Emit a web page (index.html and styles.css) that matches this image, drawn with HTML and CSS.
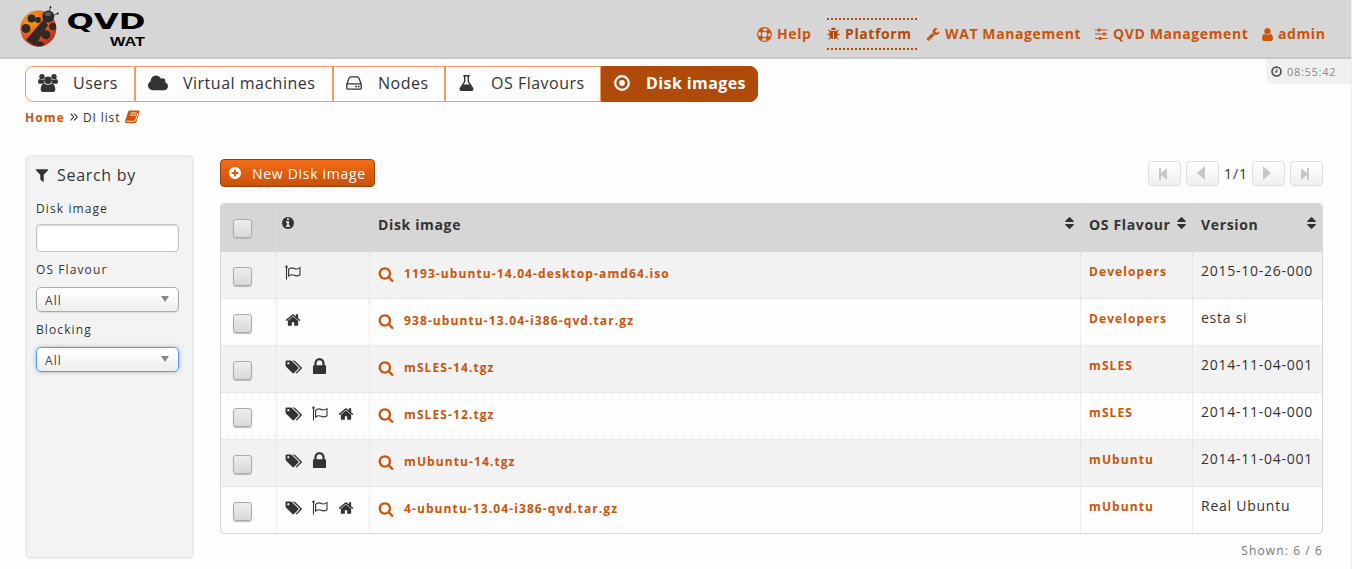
FILE: index.html
```html
<!DOCTYPE html>
<html lang="en">
<head>
<meta charset="utf-8">
<title>QVD WAT</title>
<link rel="stylesheet" href="styles.css">
</head>
<body>
<svg class="defs" width="0" height="0" aria-hidden="true">
  <symbol id="home" viewBox="0 0 1792 1792"><path d="M1472 992v480q0 26-19 45t-45 19h-384v-384h-256v384h-384q-26 0-45-19t-19-45v-480q0-1 .5-3t.5-3l575-474 575 474q1 2 1 6zm223-69l-62 74q-8 9-21 11h-3q-13 0-21-7l-692-577-692 577q-12 8-24 7-13-2-21-11l-62-74q-8-10-7-23.500t11-21.500l719-599q32-26 76-26t76 26l244 204v-195q0-14 9-23t23-9h192q14 0 23 9t9 23v408l219 182q10 8 11 21.500t-7 23.500z"/></symbol>
  <symbol id="search" viewBox="0 0 1792 1792"><path d="M1216 832q0-185-131.500-316.500t-316.500-131.500-316.500 131.500-131.500 316.500 131.500 316.500 316.500 131.500 316.500-131.500 131.500-316.500zm512 832q0 52-38 90t-90 38q-54 0-90-38l-343-342q-179 124-399 124-143 0-273.500-55.500t-225-150-150-225-55.500-273.500 55.500-273.500 150-225 225-150 273.500-55.500 273.500 55.500 225 150 150 225 55.500 273.500q0 220-124 399l343 343q37 37 37 90z"/></symbol>
  <symbol id="lock" viewBox="256 128 1280 1408"><path d="M640 768h512v-192q0-106-75-181t-181-75-181 75-75 181v192zm832 96v576q0 40-28 68t-68 28h-960q-40 0-68-28t-28-68v-576q0-40 28-68t68-28h32v-192q0-184 132-316t316-132 316 132 132 316v192h32q40 0 68 28t28 68z"/></symbol>
  <symbol id="user" viewBox="256 128 1280 1536"><path d="M1536 1399q0 109-62.500 187t-150.500 78h-854q-88 0-150.500-78t-62.500-187q0-85 8.500-160.500t31.500-152 58.500-131 94-89 134.500-34.500q131 128 313 128t313-128q76 0 134.500 34.500t94 89 58.500 131 31.500 152 8.500 160.500zm-256-887q0 159-112.500 271.500t-271.500 112.500-271.500-112.500-112.500-271.500 112.500-271.500 271.500-112.500 271.500 112.500 112.500 271.500z"/></symbol>
  <symbol id="filter" viewBox="0 0 1792 1792"><path d="M1595 295q17 41-14 70l-493 493v742q0 42-39 59-13 5-25 5-27 0-45-19l-256-256q-19-19-19-45v-486l-493-493q-31-29-14-70 17-39 59-39h1280q42 0 59 39z"/></symbol>
  <symbol id="cloud" viewBox="-64 0 1920 1792"><path d="M1856 1152q0 159-112.500 271.500t-271.500 112.500h-1088q-185 0-316.500-131.500t-131.500-316.500q0-132 71-241.500t187-163.500q-2-28-2-43 0-212 150-362t362-150q158 0 286.500 88t187.500 230q70-62 166-62 106 0 181 75t75 181q0 75-41 138 129 30 213 134.500t84 239.500z"/></symbol>
  <symbol id="plus" viewBox="0 0 1792 1792"><path d="M1344 960v-128q0-26-19-45t-45-19h-256v-256q0-26-19-45t-45-19h-128q-26 0-45 19t-19 45v256h-256q-26 0-45 19t-19 45v128q0 26 19 45t45 19h256v256q0 26 19 45t45 19h128q26 0 45-19t19-45v-256h256q26 0 45-19t19-45zm320-64q0 209-103 385.500t-279.500 279.500-385.500 103-385.500-103-279.500-279.500-103-385.500 103-385.500 279.500-279.500 385.500-103 385.500 103 279.500 279.500 103 385.500z"/></symbol>
  <symbol id="info" viewBox="128 128 1536 1536"><path d="M1152 1376v-160q0-14-9-23t-23-9h-96v-512q0-14-9-23t-23-9h-320q-14 0-23 9t-9 23v160q0 14 9 23t23 9h96v320h-96q-14 0-23 9t-9 23v160q0 14 9 23t23 9h448q14 0 23-9t9-23zm-128-896v-160q0-14-9-23t-23-9h-192q-14 0-23 9t-9 23v160q0 14 9 23t23 9h192q14 0 23-9t9-23zm640 416q0 209-103 385.500t-279.500 279.500-385.500 103-385.500-103-279.500-279.500-103-385.500 103-385.500 279.500-279.500 385.500-103 385.500 103 279.500 279.500 103 385.500z"/></symbol>
  <symbol id="sort" viewBox="384 192 1024 1408"><path d="M1408 1088q0 26-19 45l-448 448q-19 19-45 19t-45-19l-448-448q-19-19-19-45t19-45 45-19h896q26 0 45 19t19 45zm0-384q0 26-19 45t-45 19h-896q-26 0-45-19t-19-45 19-45l448-448q19-19 45-19t45 19l448 448q19 19 19 45z"/></symbol>
  <symbol id="wrench" viewBox="0 0 1792 1792"><path d="M448 1472q0-26-19-45t-45-19-45 19-19 45 19 45 45 19 45-19 19-45zm644-420l-682 682q-37 37-90 37-52 0-91-37l-106-108q-38-36-38-90 0-53 38-91l681-681q39 98 114.500 173.500t173.500 114.500zm634-435q0 39-23 106-47 134-164.500 217.500t-258.500 83.500q-185 0-316.500-131.500t-131.500-316.500 131.500-316.500 316.500-131.500q58 0 121.500 16.500t107.500 46.500q16 11 16 28t-16 28l-293 169v224l193 107q5-3 79-48.500t135.500-81 70.500-35.500q15 0 23.500 10t8.500 25z"/></symbol>
  <symbol id="bug" viewBox="64 0 1664 1792"><path d="M1696 960q0 26-19 45t-45 19h-224q0 171-67 290l208 209q19 19 19 45t-19 45q-18 19-45 19t-45-19l-198-197q-5 5-15 13t-42 28.500-65 36.500-82 29-97 13v-896h-128v896q-51 0-101.500-13.500t-87-33-66-39-43.500-32.500l-15-14-183 207q-20 21-48 21-24 0-43-16-19-18-20.500-44.500t15.500-46.500l202-227q-58-114-58-274h-224q-26 0-45-19t-19-45 19-45 45-19h224v-294l-173-173q-19-19-19-45t19-45 45-19 45 19l173 173h844l173-173q19-19 45-19t45 19 19 45-19 45l-173 173v294h224q26 0 45 19t19 45zm-480-576h-640q0-133 93.500-226.500t226.500-93.500 226.500 93.500 93.500 226.500z"/></symbol>
  <symbol id="tags" viewBox="64 128 1984 1536"><path d="M576 448q0-53-37.500-90.500t-90.500-37.500-90.500 37.500-37.500 90.500 37.500 90.500 90.500 37.500 90.500-37.500 37.500-90.500zm1067 576q0 53-37 90l-491 492q-39 37-91 37-53 0-90-37l-715-716q-38-37-64.500-101t-26.500-117v-416q0-52 38-90t90-38h416q53 0 117 26.500t102 64.500l715 714q37 39 37 91zm384 0q0 53-37 90l-491 492q-39 37-91 37-36 0-59-14t-53-45l470-470q37-37 37-90 0-52-37-91l-715-714q-38-38-102-64.500t-117-26.500h224q53 0 117 26.500t102 64.500l715 714q37 39 37 91z"/></symbol>
  <symbol id="flag" viewBox="0 0 16 15"><circle cx="1.500" cy="1.800" r="1.200"/><path d="M1.500 2v12.500" stroke="currentColor" stroke-width="1.100"/><path d="M3.600 4.300Q6.500 2 9.300 3.400T15 2.600V9.700Q12 11.600 9.200 10.300T3.600 11Z" fill="none" stroke="currentColor" stroke-width="1.100"/></symbol>
  <symbol id="users" viewBox="0 0 20 18"><circle cx="4" cy="2.700" r="2.700"/><circle cx="16" cy="2.700" r="2.700"/><path d="M0 8.300C0 6 .8 5 2 5q2 1.400 4 .6-.5 2.800.8 4.200H2Q0 9.800 0 8.300ZM20 8.300C20 6 19.200 5 18 5q-2 1.400-4 .6.5 2.800-.8 4.200H18q2 0 2-1.500Z"/><circle cx="10" cy="6.200" r="3.800"/><path d="M2.700 15.500C2.700 12 4 9.800 6.200 9.700q3.800 2.200 7.600 0C16 9.800 17.300 12 17.300 15.500q0 2.500-2.600 2.500H5.300q-2.600 0-2.600-2.500Z"/></symbol>
  <symbol id="disk" viewBox="0 0 16 14"><path d="M.8 8.200 3.100 2Q3.500.8 4.700.8h6.600q1.200 0 1.600 1.200l2.300 6.200V12q0 1.200-1.200 1.200H2Q.8 13.200.8 12ZM1 7.800h14" fill="none" stroke="currentColor" stroke-width="1.300"/><circle cx="10" cy="10.500" r=".9"/><circle cx="12.700" cy="10.500" r=".9"/></symbol>
  <symbol id="flask" viewBox="0 0 15 16"><path d="M4.300.8h6.400M5.700 1v5.500L1.500 13.200q-1 1.900 1 2h10q2-.1 1-2L9.300 6.500V1" fill="none" stroke="currentColor" stroke-width="1.400"/><path d="M4.300 9.500h6.400l2.800 4.800q0 .9-1 .9h-10q-1 0-1-.9Z"/></symbol>
  <symbol id="target" viewBox="0 0 16 16"><circle cx="8" cy="8" r="6.800" fill="none" stroke="currentColor" stroke-width="2.200"/><circle cx="8" cy="8" r="2.900"/></symbol>
  <symbol id="ring" viewBox="0 0 14 14"><circle cx="7" cy="7" r="4.600" fill="none" stroke="currentColor" stroke-width="3.200" stroke-dasharray="3.600 3.627" stroke-dashoffset="-1.800"/><circle cx="7" cy="7" r="6.400" fill="none" stroke="currentColor" stroke-width="1.100"/><circle cx="7" cy="7" r="3" fill="none" stroke="currentColor" stroke-width="1"/></symbol>
  <symbol id="sliders" viewBox="0 0 13 12"><path d="M0 2h12.500M0 6h12.500M0 10.500h12.500" stroke="currentColor" stroke-width="1.100"/><path d="M3 .5h2.500v3H3zM8 4.500h2.500v3H8zM4 9h2.500v3H4z"/></symbol>
  <symbol id="clock" viewBox="0 0 12 12"><circle cx="6" cy="6" r="4.900" fill="none" stroke="currentColor" stroke-width="1.700"/><path d="M6.400 3v3.500H4" fill="none" stroke="currentColor" stroke-width="1.100"/></symbol>
  <symbol id="book" viewBox="0 0 15 14"><path d="M4.500.4h9q1.400.2 1 1.500l-2.800 9.400q-.5 1.900-2.300 2H2Q-.2 13.200.2 11L3 2Q3.400.5 4.500.4Z"/><path d="M5.700 3h6M5 5.200h6M1.600 11.300h7.600q1 0 1.400-1.200l2.300-7" stroke="#fdfdfd" stroke-width=".9" fill="none"/></symbol>
</svg>
<div class="page">
  <header class="header">
    <svg class="logo" width="130" height="44" viewBox="0 0 130 44" role="img" aria-label="QVD WAT">
      <defs>
        <radialGradient id="shell" cx=".3" cy=".25" r=".8"><stop offset="0" stop-color="#fca416"/><stop offset=".5" stop-color="#ec6420"/><stop offset="1" stop-color="#b93420"/></radialGradient>
        <clipPath id="body"><circle cx="18.300" cy="23.500" r="18"/></clipPath>
      </defs>
      <circle cx="18.300" cy="23.500" r="18" fill="url(#shell)"/>
      <g fill="#332922" clip-path="url(#body)"><path d="M24 14 6 35l9 6L28 20Z"/><circle cx="11.500" cy="13.500" r="4"/><circle cx="18" cy="15" r="2.900"/><circle cx="6" cy="23.500" r="4.500"/><circle cx="33" cy="21.500" r="3.800"/><circle cx="26" cy="29.700" r="4.500"/><circle cx="20" cy="40" r="3.800"/></g>
      <path d="M29 7 30.500 2.500M33 10.500 37.500 8.500" stroke="#222" fill="none" stroke-width=".8"/>
      <circle cx="28.300" cy="11.500" r="6" fill="#292c2d"/><ellipse cx="28" cy="9" rx="3" ry="2" fill="#596063"/><circle cx="30.500" cy="2.200" r=".9"/><circle cx="37.700" cy="8.500" r=".9"/>
      <text class="brand" x="46.500" y="24" textLength="79" lengthAdjust="spacingAndGlyphs">QVD</text>
      <text class="product" x="90" y="40.500" textLength="35" lengthAdjust="spacingAndGlyphs">WAT</text>
    </svg>
    <nav class="menu">
      <a class="m-help"><svg width="15" height="15"><use href="#ring"/></svg><span>Help</span></a>
      <a class="m-platform current"><svg width="13" height="14"><use href="#bug"/></svg><span>Platform</span></a>
      <a class="m-wat"><svg width="14" height="14"><use href="#wrench"/></svg><span>WAT Management</span></a>
      <a class="m-qvd"><svg width="13" height="12"><use href="#sliders"/></svg><span>QVD Management</span></a>
      <a class="m-admin"><svg width="11" height="13"><use href="#user"/></svg><span>admin</span></a>
    </nav>
  </header>
  <div class="top">
    <div>
      <nav class="tabs">
        <a class="t1"><svg width="20" height="18"><use href="#users"/></svg><span>Users</span></a>
        <a class="t2"><svg width="20" height="19"><use href="#cloud"/></svg><span>Virtual machines</span></a>
        <a class="t3"><svg width="16" height="14"><use href="#disk"/></svg><span>Nodes</span></a>
        <a class="t4"><svg width="15" height="16"><use href="#flask"/></svg><span>OS Flavours</span></a>
        <a class="t5"><svg width="16" height="16"><use href="#target"/></svg><span>Disk images</span></a>
      </nav>
      <div class="crumbs"><b>Home</b><svg width="8" height="8" viewBox="0 0 8 8"><path d="M.7.7 3.700 4 .7 7.300M4.200.7 7.200 4 4.200 7.300" fill="none" stroke="#333" stroke-width="1.100"/></svg><span>DI list</span><svg class="book" width="15" height="14"><use href="#book"/></svg></div>
    </div>
    <div class="time"><svg width="11" height="11"><use href="#clock"/></svg><span>08:55:42</span></div>
  </div>
  <main class="content">
    <aside class="side">
      <h2><svg width="16" height="16"><use href="#filter"/></svg><span>Search by</span></h2>
      <label>Disk image</label>
      <div class="input"></div>
      <label class="l2">OS Flavour</label>
      <div class="select"><span>All</span><i></i></div>
      <label class="l3">Blocking</label>
      <div class="select focus"><span>All</span><i></i></div>
    </aside>
    <section class="list">
      <div class="toolbar">
        <a class="new"><svg width="14" height="14"><use href="#plus"/></svg><span>New Disk image</span></a>
        <div class="pager">
          <b><svg width="10" height="12" viewBox="0 0 10 12"><path d="M1 0h2v5L9 0v12L3 7v5H1Z"/></svg></b>
          <b><svg width="10" height="14" viewBox="0 0 10 14"><path d="M9 0v14L1 7Z"/></svg></b>
          <span>1/1</span>
          <b><svg width="10" height="14" viewBox="0 0 10 14"><path d="M1 0v14L9 7Z"/></svg></b>
          <b><svg width="10" height="12" viewBox="0 0 10 12"><path d="M9 0H7v5L1 0v12L7 7v5h2Z"/></svg></b>
        </div>
      </div>
      <div class="grid">
        <div class="row head"><div class="check"><i></i></div><div class="icons"><svg width="12" height="12"><use href="#info"/></svg></div><div class="name"><span>Disk image</span><svg width="9" height="12"><use href="#sort"/></svg></div><div class="os"><span>OS Flavour</span><svg width="9" height="12"><use href="#sort"/></svg></div><div class="ver"><span>Version</span><svg width="9" height="12"><use href="#sort"/></svg></div></div>
        <div class="row odd"><div class="check"><i></i></div><div class="icons"><svg class="flag"><use href="#flag"/></svg></div><div class="name"><svg width="16" height="16"><use href="#search"/></svg><span>1193-ubuntu-14.04-desktop-amd64.iso</span></div><div class="os">Developers</div><div class="ver">2015-10-26-000</div></div>
        <div class="row"><div class="check"><i></i></div><div class="icons"><svg class="home"><use href="#home"/></svg></div><div class="name"><svg width="16" height="16"><use href="#search"/></svg><span>938-ubuntu-13.04-i386-qvd.tar.gz</span></div><div class="os">Developers</div><div class="ver">esta si</div></div>
        <div class="row odd"><div class="check"><i></i></div><div class="icons"><svg class="tags"><use href="#tags"/></svg><svg class="lock"><use href="#lock"/></svg></div><div class="name"><svg width="16" height="16"><use href="#search"/></svg><span>mSLES-14.tgz</span></div><div class="os">mSLES</div><div class="ver">2014-11-04-001</div></div>
        <div class="row"><div class="check"><i></i></div><div class="icons"><svg class="tags"><use href="#tags"/></svg><svg class="flag"><use href="#flag"/></svg><svg class="home"><use href="#home"/></svg></div><div class="name"><svg width="16" height="16"><use href="#search"/></svg><span>mSLES-12.tgz</span></div><div class="os">mSLES</div><div class="ver">2014-11-04-000</div></div>
        <div class="row odd"><div class="check"><i></i></div><div class="icons"><svg class="tags"><use href="#tags"/></svg><svg class="lock"><use href="#lock"/></svg></div><div class="name"><svg width="16" height="16"><use href="#search"/></svg><span>mUbuntu-14.tgz</span></div><div class="os">mUbuntu</div><div class="ver">2014-11-04-001</div></div>
        <div class="row"><div class="check"><i></i></div><div class="icons"><svg class="tags"><use href="#tags"/></svg><svg class="flag"><use href="#flag"/></svg><svg class="home"><use href="#home"/></svg></div><div class="name"><svg width="16" height="16"><use href="#search"/></svg><span>4-ubuntu-13.04-i386-qvd.tar.gz</span></div><div class="os">mUbuntu</div><div class="ver">Real Ubuntu</div></div>
      </div>
      <div class="shown">Shown: 6 / 6</div>
    </section>
  </main>
</div>
</body>
</html>
```
FILE: styles.css
```css
* { box-sizing: border-box; }
body { margin: 0; overflow: hidden; background: #fdfdfd; color: #333; font-family: "Open Sans", "Noto Sans", sans-serif; font-size: 12px; letter-spacing: 1.1px; white-space: nowrap; }
svg { fill: currentColor; flex: none; display: block; }
.defs { position: absolute; }
.page { width: 1352px; height: 569px; border-right: 1px solid #eee; overflow: hidden; }

.header { height: 59px; background: #d6d6d6; border-bottom: 2px solid #c8c8c8; display: flex; justify-content: space-between; padding-left: 20px; }
.logo { margin-top: 5px; overflow: visible; fill: #000; }
.brand { font: bold 20.500px "DejaVu Sans", sans-serif; letter-spacing: 0; }
.product { font: bold 12.500px "Liberation Sans", sans-serif; letter-spacing: 0; }
.menu { display: flex; height: 32px; margin-top: 18px; color: #cb540d; font-weight: bold; font-size: 14px; letter-spacing: .6px; }
.menu a { display: flex; align-items: center; border: solid transparent; border-width: 2px 0; line-height: 28px; }
.menu a svg { margin-right: 5px; }
.menu span { margin-top: -1px; }
.m-help { width: 70px; }
.m-platform { width: 90px; margin-right: 9px; }
.m-wat { width: 169px; }
.m-qvd { width: 167px; }
.m-admin { width: 89px; }
.menu .current { border: dotted #b04a0a; border-width: 2px 0; color: #b04a0a; }

.top { display: flex; justify-content: space-between; height: 96px; padding-left: 25px; }
.tabs { display: flex; height: 36px; margin-top: 7px; font-size: 16px; letter-spacing: .5px; }
.tabs a { display: flex; align-items: center; border: 1px solid #f49a62; padding-left: 12px; line-height: 32px; padding-bottom: 2px; }
.t1 { width: 110px; border-radius: 8px 0 0 8px; }
.t1 span { margin-left: 15px; }
.t2 { width: 198px; }
.t2 span { margin-left: 15px; }
.t3 { width: 112px; }
.t3 span { margin-left: 16px; }
.tabs .t4 { width: 156px; padding-left: 13px; }
.t4 span { margin-left: 17px; }
.tabs .t5 { width: 157px; border-radius: 0 8px 8px 0; background: #b04a0a; border-color: #b04a0a; color: #fff; font-weight: bold; letter-spacing: .4px; }
.t5 span { margin-left: 16px; }
.crumbs { display: flex; align-items: center; height: 16px; margin-top: 7px; gap: 5px; }
.crumbs b { color: #cb540d; }
.crumbs span { letter-spacing: .9px; }
.book { color: #cb540d; }
.time { display: flex; align-items: center; gap: 5px; width: 85px; height: 25px; background: #f0f0f0; border-radius: 0 0 0 8px; padding-left: 5px; color: #8a8a8a; font-size: 11px; letter-spacing: .7px; }
.time svg { color: #444; }

.content { display: flex; padding-left: 25px; }
.side { width: 169px; height: 404px; background: #f3f3f3; border: 2px solid #eaeaea; border-radius: 6px; padding: 8px 13px 0 9px; display: flex; flex-direction: column; }
.side h2 { display: flex; align-items: center; margin: 0 0 15px -2px; height: 20px; font-size: 16px; letter-spacing: .7px; font-weight: normal; }
.side h2 span { margin-left: 7px; }
.side label { line-height: 17px; margin-bottom: 7px; }
.input { height: 28px; border: 1px solid #c2c2c2; border-radius: 4px; background: #fff; box-shadow: inset 0 1px 2px #ddd; }
.side .l2 { margin: 9px 0 9px; }
.side .l3 { margin: 9px 0 9px; }
.select { height: 25px; border: 1px solid #aaa; border-radius: 5px; background: linear-gradient(#fff 20%, #f0f0f0 80%, #eee); display: flex; align-items: center; justify-content: space-between; padding: 0 9px 0 8px; color: #444; box-shadow: 0 1px 1px #ddd; }
.select span { padding-top: 1px; }
.select i { border: 4px solid transparent; border-top: 6px solid #888; border-bottom: 0; margin-bottom: 1px; }
.focus { border-color: #5897fb; box-shadow: 0 0 4px #b0b0b0; }

.list { width: 1103px; margin-left: 26px; }
.toolbar { display: flex; justify-content: space-between; height: 48px; padding-top: 4px; }
.new { display: flex; align-items: center; width: 155px; height: 28px; border: 1px solid #a04109; border-radius: 4px; background: linear-gradient(#f56b16, #c8510b); color: #fff; font-size: 14px; letter-spacing: .7px; padding-left: 7px; gap: 10px; }
.pager { display: flex; gap: 5px; margin-top: 2px; height: 25px; font-size: 14px; letter-spacing: .9px; color: #c7c7c7; }
.pager b { width: 33px; height: 25px; border: 1px solid #ddd; border-radius: 4px; background: linear-gradient(#fff, #f0f0f0); display: flex; align-items: center; justify-content: center; padding-right: 3px; }
.pager b:nth-child(2), .pager b:nth-child(4) { padding-bottom: 2px; }
.pager span { color: #333; line-height: 25px; width: 23px; }
.grid { border: 1px solid #d6d6d6; border-radius: 4px; overflow: hidden; }
.row { display: flex; height: 47px; border-bottom: 1px dotted #ddd; }
.row:last-child { height: 46px; border-bottom: 0; }
.odd { background: #f2f2f2; }
.head { height: 48px; background: #d6d6d6; font-weight: bold; font-size: 14px; letter-spacing: .65px; }
.row > div { display: flex; border-right: 1px dotted #ddd; height: 100%; }
.row > div:last-child { border-right: 0; }
.row .check { width: 56px; padding: 15px 0 0 12px; }
.check i { width: 19px; height: 19px; border: 1px solid #aaa; border-radius: 3px; background: linear-gradient(#eee, #d8d8d8); box-shadow: 0 1px 1px #bbb; }
.row .icons { width: 93px; height: 41px; padding-left: 8px; align-items: center; gap: 10px; height: 100%; padding-bottom: 5px; }
.head .icons { padding: 0 0 9px 5px; }
.icons .flag { width: 16px; height: 15px; }
.icons .home { width: 16px; height: 16px; }
.icons .tags { width: 17px; height: 14px; }
.icons .lock { width: 15px; height: 16px; margin-top: -2px; }
.row .name { width: 711px; padding: 0 6px 0 8px; align-items: flex-start; }
.name > span { margin-left: 10px; padding-top: 13px; line-height: 18px; }
.row .name > svg { margin-top: 14px; }
.row:not(.head) .name, .row:not(.head) .os { color: #cb540d; font-weight: bold; }
.row .os { width: 112px; padding: 11px 6px 0 8px; line-height: 18px; }
.row .ver { flex: 1; padding: 10px 6px 0 8px; font-size: 14px; line-height: 18px; letter-spacing: .75px; }
.head > div { justify-content: space-between; }
.row.head .icons { justify-content: flex-start; }
.head .name > span { margin: 0; padding-top: 12px; }
.row.head .os, .row.head .ver { padding-top: 12px; letter-spacing: .65px; }
.head .os svg, .head .ver svg { margin-top: 1px; }
.row.head .name svg { margin-top: 13px; }
.shown { text-align: right; margin-top: 8px; line-height: 18px; color: #777; }
```
